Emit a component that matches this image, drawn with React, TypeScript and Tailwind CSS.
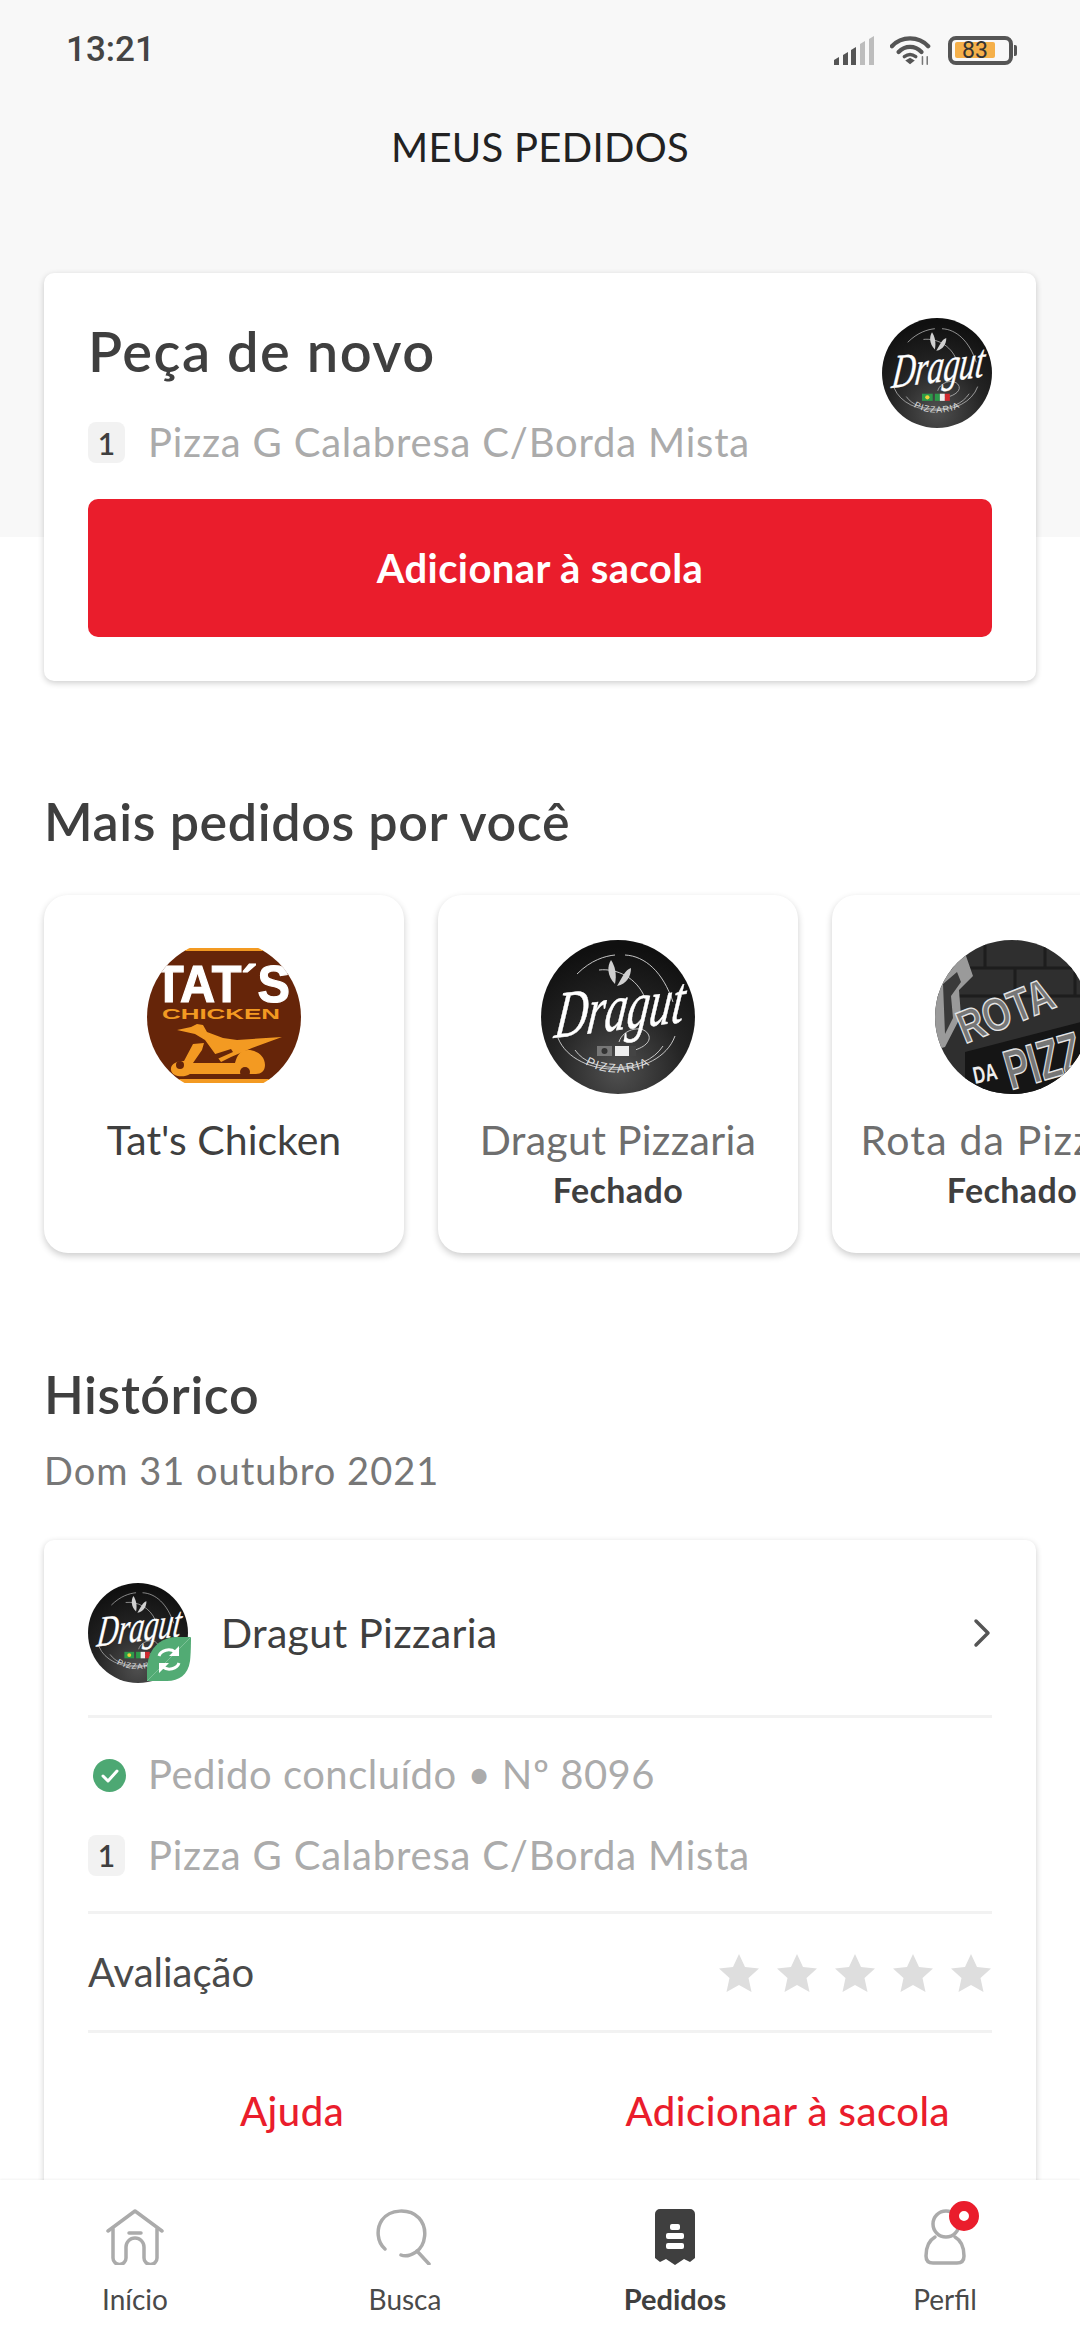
import React from "react";

const font = "font-['Lato','Noto_Sans',sans-serif]";

function SignalIcon() {
    return (
        <svg width="40" height="29" viewBox="0 0 40 29">
            <path d="M0 24l5-3v8H0z" fill="#555" />
            <path d="M9 19l5-3v13H9z" fill="#555" />
            <path d="M17 14l5-3v18h-5z" fill="#555" />
            <path d="M26 8l5-3v24h-5z" fill="#bdbdbd" />
            <path d="M35 3l5-3v29h-5z" fill="#bdbdbd" />
        </svg>
    );
}

function WifiIcon() {
    return (
        <svg width="42" height="31" viewBox="0 0 44 31" fill="none" stroke="#555" strokeWidth="4.500" strokeLinecap="round">
            <path d="M2 11C12 0 30 0 40 11" />
            <path d="M9 17c7-7 17-7 24 0" />
            <path d="M15 22c4-3 8-3 12 0" strokeWidth="3.5" />
            <path d="M21 23l5 3-5 4-5-4z" fill="#555" stroke="none" />
            <path d="M34 22v8M39 22v8" stroke="#777" strokeWidth="1.6" />
        </svg>
    );
}

function Battery() {
    return (
        <div className="flex items-center">
            <div className="flex h-[29px] w-[65px] items-center rounded-[8px] border-[4px] border-[#555] pl-[3px]">
                <div className="flex h-[16px] w-[40px] items-center justify-center rounded-[2px] bg-[#f5b04a] font-['Roboto',sans-serif] text-[23px] leading-none text-[#333]">
                    83
                </div>
            </div>
            <div className="ml-[1px] h-[11px] w-[3px] rounded-r-[2px] bg-[#555]" />
        </div>
    );
}

// round black logo of the pizzeria, grey when it is closed
function DragutLogo({ size, grey = false, id }: { size: number; grey?: boolean; id: string }) {
    return (
        <svg width={size} height={size} viewBox="0 0 154 154" className="shrink-0">
            <defs>
                <radialGradient id={id} cx="50%" cy="85%" r="80%">
                    <stop offset="0%" stopColor="#505050" />
                    <stop offset="55%" stopColor="#232323" />
                    <stop offset="100%" stopColor="#101010" />
                </radialGradient>
            </defs>
            <circle cx="77" cy="77" r="77" fill={`url(#${id})`} />
            <g fill="none" stroke="#d8d8d8" strokeWidth="0.9">
                <path d="M36 34C50 20 64 16 74 15" />
                <path d="M84 15C104 16 122 32 132 62" />
                <path d="M58 30C76 28 96 38 104 58" />
                <path d="M17 98C34 140 118 140 134 96" />
                <path d="M34 110C50 134 104 134 122 106" />
                <path d="M78 102c4-14 26-18 30-6 2 8-10 14-22 16" />
            </g>
            <g fill="#d0d0d0">
                <path d="M74 44C66 36 66 26 70 20c4 6 6 14 4 24z" />
                <path d="M76 46C82 36 84 30 90 28c0 8-4 16-14 18z" />
            </g>
            <g transform="rotate(-7 76 80) translate(22 0) skewX(-14)">
                <text x="76" y="90" textAnchor="middle" fill="#fff" stroke="#fff" strokeWidth="0.5" fontFamily="'Liberation Serif',serif" fontStyle="italic" fontSize="66" textLength="130" lengthAdjust="spacingAndGlyphs">
                    Dragut
                </text>
            </g>
            <rect x="56" y="106" width="15" height="10" fill={grey ? "#777" : "#2d9a49"} />
            <circle cx="63.5" cy="111" r="3" fill={grey ? "#333" : "#f0d23c"} />
            <rect x="74" y="106" width="7" height="10" fill={grey ? "#eee" : "#2d9a49"} />
            <rect x="81" y="106" width="7" height="10" fill="#eee" />
            <rect x="88" y="106" width="7" height="10" fill={grey ? "#444" : "#d2292f"} />
            <path id={`${id}-arc`} d="M36 116C50 138 104 138 118 116" fill="none" />
            <text fill="#ddd" fontFamily="'Liberation Sans',sans-serif" fontSize="12.5" letterSpacing="1.5">
                <textPath href={`#${id}-arc`} startOffset="50%" textAnchor="middle">
                    PIZZARIA
                </textPath>
            </text>
        </svg>
    );
}

function TatsLogo() {
    return (
        <svg width="154" height="154" viewBox="0 0 154 154" className="shrink-0">
            <defs>
                <clipPath id="tats-clip">
                    <circle cx="77" cy="77" r="77" />
                </clipPath>
            </defs>
            <g clipPath="url(#tats-clip)">
                <rect x="0" y="0" width="154" height="154" fill="#fff" />
                <rect x="0" y="10" width="154" height="130" fill="#662509" />
                <rect x="30" y="8" width="94" height="3" fill="#f39a22" />
                <rect x="30" y="139" width="94" height="4" fill="#f39a22" />
                <text x="7" y="62" fill="#fff" stroke="#fff" strokeWidth="1.2" fontFamily="'Liberation Sans',sans-serif" fontWeight="700" fontSize="52" textLength="136" lengthAdjust="spacingAndGlyphs">
                    TAT´S
                </text>
                <text x="15" y="79" fill="#f39a22" fontFamily="'Liberation Sans',sans-serif" fontWeight="700" fontSize="15" textLength="118" lengthAdjust="spacingAndGlyphs">
                    CHICKEN
                </text>
                <g fill="#f39a22">
                    {/* bird */}
                    <path d="M30 90l14-3 6-3 6 1 4 7 16 6 14 2 45-3-30 11-21 9-10 5-16-22-10-6z" />
                    {/* scooter */}
                    <path d="M46 104l11-1-2 7-9 13 42 0c2-8 6-13 13-13 9 0 17 6 17 15 0 6-4 9-9 9H43c-6 4-18 3-19-4-1-6 6-9 13-9z" />
                </g>
                <path d="M62 116l22-7 2 3-18 8z" fill="#662509" />
                <circle cx="33" cy="125" r="4" fill="#662509" />
                <circle cx="98" cy="132" r="5" fill="#662509" />
            </g>
        </svg>
    );
}

function RotaLogo() {
    return (
        <svg width="154" height="154" viewBox="0 0 154 154" className="shrink-0">
            <defs>
                <clipPath id="rota-clip">
                    <circle cx="77" cy="77" r="77" />
                </clipPath>
            </defs>
            <g clipPath="url(#rota-clip)">
                <rect width="154" height="154" fill="#2f2f2f" />
                <g stroke="#1d1d1d" strokeWidth="3" fill="none">
                    <path d="M0 28h154M0 56h154M50 0v28M110 0v28M80 28v28M140 28v28" />
                </g>
                <path d="M0 34L30 13 38 36 24 50 26 76 10 107 0 110z" fill="#9a9a9a" />
                <path d="M8 44l14-12 4 10-10 14 2 22-8 16z" fill="#3a3a3a" />
                <path d="M30 112L154 80V154H30z" fill="#151515" />
                <g fontFamily="'Liberation Sans',sans-serif" fontWeight="700" fill="#767676" stroke="#e6e6e6" strokeWidth="1.4">
                    <text x="30" y="104" fontSize="46" transform="rotate(-22 30 104)" textLength="100" lengthAdjust="spacingAndGlyphs">
                        ROTA
                    </text>
                    <text x="76" y="150" fontSize="56" transform="rotate(-16 76 150)" textLength="78" lengthAdjust="spacingAndGlyphs">
                        PIZZ
                    </text>
                </g>
                <text x="40" y="144" fontFamily="'Liberation Sans',sans-serif" fontWeight="700" fontSize="24" fill="#eee" textLength="24" lengthAdjust="spacingAndGlyphs" transform="rotate(-12 40 144)">
                    DA
                </text>
            </g>
        </svg>
    );
}

function QtyBadge() {
    return (
        <div className="flex h-[41px] w-[37px] shrink-0 items-center justify-center rounded-[8px] bg-[#f2f2f2] text-[30px] font-semibold leading-none text-[#3f3f3f]">
            1
        </div>
    );
}

function Star() {
    return (
        <svg width="40" height="38" viewBox="0 0 40 38">
            <path d="M20 0l6 13 14 1.500-10.500 9.500 3 14L20 31l-12.500 7 3-14L0 14.500 14 13z" fill="#dedede" />
        </svg>
    );
}

function NavItem({ label, active, children }: { label: string; active?: boolean; children: React.ReactNode }) {
    return (
        <div className="flex flex-col items-center">
            <div className="flex h-[58px] items-end">{children}</div>
            <span className={`mt-[17px] text-[28px] leading-[34px] ${active ? "text-[29px] font-bold text-[#3f3f3f]" : "text-[#4a4a4a]"}`}>{label}</span>
        </div>
    );
}

export default function App() {
    return (
        <div className={`${font} relative flex h-[2340px] w-[1080px] flex-col overflow-hidden bg-white`}>
            <div className="h-[2180px] shrink-0 overflow-hidden">
                {/* grey header */}
                <div className="h-[537px] bg-[#f8f8f8]">
                    <div className="flex h-[100px] items-center justify-between pl-[66px] pr-[63px]">
                        <span className="font-['Roboto',sans-serif] text-[35px] font-medium text-[#444]">13:21</span>
                        <div className="flex items-center gap-[16px]">
                            <SignalIcon />
                            <WifiIcon />
                            <Battery />
                        </div>
                    </div>
                    <div className="flex h-[96px] items-center justify-center pb-[2px] text-[40px] tracking-[0.3px] text-[#222]">MEUS PEDIDOS</div>
                </div>

                {/* reorder card */}
                <div className="mx-[44px] -mt-[264px] h-[408px] rounded-[10px] bg-white px-[44px] pt-[45px] shadow-[0_2px_6px_rgba(0,0,0,0.2)]">
                    <div className="flex items-start justify-between">
                        <div className="flex h-[68px] items-center pb-[2px] text-[56px] font-semibold tracking-[1.5px] text-[#3f3f3f]">Peça de novo</div>
                        <DragutLogo size={110} id="logo-top" />
                    </div>
                    <div className="-mt-[6px] flex h-[41px] items-center gap-[23px]">
                        <QtyBadge />
                        <span className="text-[40px] leading-[41px] tracking-[0.8px] text-[#ababab]">Pizza G Calabresa C/Borda Mista</span>
                    </div>
                    <button className="mt-[36px] flex h-[138px] w-full items-center justify-center rounded-[10px] bg-[#ea1d2c] text-[40px] font-bold tracking-[0.4px] text-white">
                        Adicionar à sacola
                    </button>
                </div>

                <h2 className="ml-[44px] mt-[111px] flex h-[60px] items-center pb-[2px] text-[52px] font-semibold tracking-[0.6px] text-[#3f3f3f]">Mais pedidos por você</h2>

                <div className="mt-[43px] flex gap-[34px] px-[44px]">
                    <div className="flex h-[358px] w-[360px] shrink-0 flex-col items-center rounded-[24px] bg-white pt-[45px] shadow-[0_3px_7px_rgba(0,0,0,0.2)]">
                        <TatsLogo />
                        <span className="mt-[22px] text-[41px] leading-[48px] text-[#3f3f3f]">Tat's Chicken</span>
                    </div>
                    <div className="flex h-[358px] w-[360px] shrink-0 flex-col items-center rounded-[24px] bg-white pt-[45px] shadow-[0_3px_7px_rgba(0,0,0,0.2)]">
                        <DragutLogo size={154} grey id="logo-card" />
                        <span className="mt-[22px] text-[41px] leading-[48px] tracking-[0.3px] text-[#6e6e6e]">Dragut Pizzaria</span>
                        <span className="mt-[6px] text-[34px] font-bold leading-[40px] tracking-[0.4px] text-[#3f3f3f]">Fechado</span>
                    </div>
                    <div className="flex h-[358px] w-[360px] shrink-0 flex-col items-center rounded-[24px] bg-white pt-[45px] shadow-[0_3px_7px_rgba(0,0,0,0.2)]">
                        <RotaLogo />
                        <span className="mt-[22px] whitespace-nowrap text-[41px] leading-[48px] tracking-[1.2px] text-[#6e6e6e]">Rota da Pizzaria</span>
                        <span className="mt-[6px] text-[34px] font-bold leading-[40px] tracking-[0.4px] text-[#3f3f3f]">Fechado</span>
                    </div>
                </div>

                <h2 className="ml-[44px] mt-[112px] flex h-[60px] items-center pb-[2px] text-[52px] font-semibold tracking-[0.6px] text-[#3f3f3f]">Histórico</h2>
                <div className="ml-[44px] mt-[21px] flex h-[50px] items-center pb-[2px] text-[38px] tracking-[1px] text-[#777]">Dom 31 outubro 2021</div>

                {/* order history card */}
                <div className="mx-[44px] mt-[44px] h-[700px] rounded-[10px] bg-white px-[44px] pt-[43px] shadow-[0_2px_6px_rgba(0,0,0,0.2)]">
                    <div className="flex h-[100px] items-center">
                        <div className="relative h-[100px] w-[100px] shrink-0">
                            <DragutLogo size={100} id="logo-hist" />
                            <svg width="44" height="44" viewBox="0 0 44 44" className="absolute left-[59px] top-[54px]">
                                <path d="M44 0C44 0 44 16 43 24C41 38 32 44 20 44H0C0 44-1 30 2 20C6 8 16 0 30 0z" fill="#52ab74" />
                                <path d="M0 44L44 0" stroke="#7cc196" strokeWidth="1" />
                                <g fill="none" stroke="#fff" strokeWidth="3">
                                    <path d="M12 19c2-6 11-8 16-4" />
                                    <path d="M32 26c-2 6-11 8-16 4" />
                                </g>
                                <path d="M32 9v10H22zM12 36V26h10z" fill="#fff" />
                            </svg>
                        </div>
                        <span className="ml-[33px] flex-1 text-[41px] tracking-[0.3px] text-[#3f3f3f]">Dragut Pizzaria</span>
                        <svg width="20" height="30" viewBox="0 0 20 30" fill="none" stroke="#555" strokeWidth="3.500" strokeLinecap="round" strokeLinejoin="round">
                            <path d="M4 3l12 12L4 27" />
                        </svg>
                    </div>
                    <div className="mt-[32px] h-[3px] bg-[#f2f2f2]" />
                    <div className="mt-[32px] flex h-[50px] items-center">
                        <svg width="33" height="33" viewBox="0 0 33 33" className="ml-[5px] shrink-0">
                            <circle cx="16.500" cy="16.500" r="16.500" fill="#4da873" />
                            <path d="M10 17l5 5 9-10" fill="none" stroke="#fff" strokeWidth="3" strokeLinecap="round" strokeLinejoin="round" />
                        </svg>
                        <span className="ml-[22px] pb-[2px] text-[40px] tracking-[0.5px] text-[#ababab]">Pedido concluído • Nº 8096</span>
                    </div>
                    <div className="mt-[30px] flex h-[50px] items-center gap-[23px]">
                        <QtyBadge />
                        <span className="text-[40px] leading-[41px] tracking-[0.8px] text-[#ababab]">Pizza G Calabresa C/Borda Mista</span>
                    </div>
                    <div className="mt-[31px] h-[3px] bg-[#f2f2f2]" />
                    <div className="mt-[34px] flex h-[50px] items-center justify-between">
                        <span className="pb-[2px] text-[40px] text-[#4a4a4a]">Avaliação</span>
                        <div className="flex gap-[18px] pr-[1px]">
                            <Star />
                            <Star />
                            <Star />
                            <Star />
                            <Star />
                        </div>
                    </div>
                    <div className="mt-[32px] h-[3px] bg-[#f2f2f2]" />
                    <div className="mt-[48px] flex h-[60px] items-center text-[40px] font-medium tracking-[0.5px] text-[#ea1d2c]">
                        <span className="w-[408px] text-center">Ajuda</span>
                        <span className="flex-1 pr-[42px] text-right">Adicionar à sacola</span>
                    </div>
                </div>
            </div>

            {/* bottom nav */}
            <nav className="z-10 grid h-[160px] shrink-0 grid-cols-4 bg-white pt-[27px] shadow-[0_-1px_2px_rgba(0,0,0,0.05)]">
                <NavItem label="Início">
                    <svg width="58" height="56" viewBox="0 0 58 56" fill="none" stroke="#ababab" strokeWidth="3.500" strokeLinecap="round" strokeLinejoin="round">
                        <path d="M2 22L29 2l27 20" />
                        <path d="M7 20v29a6 6 0 0 0 13 0V38a9 9 0 0 1 18 0v11a6 6 0 0 0 13 0V20" />
                        <path d="M23 24h12" />
                    </svg>
                </NavItem>
                <NavItem label="Busca">
                    <svg width="58" height="56" viewBox="0 0 58 56" fill="none" stroke="#ababab" strokeWidth="3.500" strokeLinecap="round">
                        <path d="M9 40C1 33 0 20 6 11 14 0 33-1 43 9c9 10 7 27-3 34-6 4-10 5-15 3" />
                        <path d="M41 42l12 13" />
                    </svg>
                </NavItem>
                <NavItem label="Pedidos" active>
                    <svg width="40" height="56" viewBox="0 0 40 56">
                        <path d="M5 0h30a5 5 0 0 1 5 5v44l-5 4-6-3-9 6-9-6-6 3-5-4V5a5 5 0 0 1 5-5z" fill="#3f3f3f" />
                        <rect x="15" y="15" width="10" height="6" rx="2" fill="#fff" />
                        <rect x="11" y="24" width="18" height="6" rx="2" fill="#fff" />
                        <rect x="11" y="34" width="18" height="6" rx="2" fill="#fff" />
                    </svg>
                </NavItem>
                <NavItem label="Perfil">
                    <div className="relative h-[56px] w-[42px]">
                        <svg width="42" height="56" viewBox="0 0 42 56" fill="none" stroke="#ababab" strokeWidth="3.500" strokeLinecap="round">
                            <circle cx="22" cy="15" r="13" />
                            <path d="M11 28C4 32 2 38 2 47c0 5 3 7 7 7h24c4 0 7-2 7-7 0-9-2-15-9-19" />
                        </svg>
                        <div className="absolute -right-[13px] -top-[8px] h-[30px] w-[30px] rounded-full border-[10px] border-[#ea1d2c] bg-white" />
                    </div>
                </NavItem>
            </nav>
        </div>
    );
}
